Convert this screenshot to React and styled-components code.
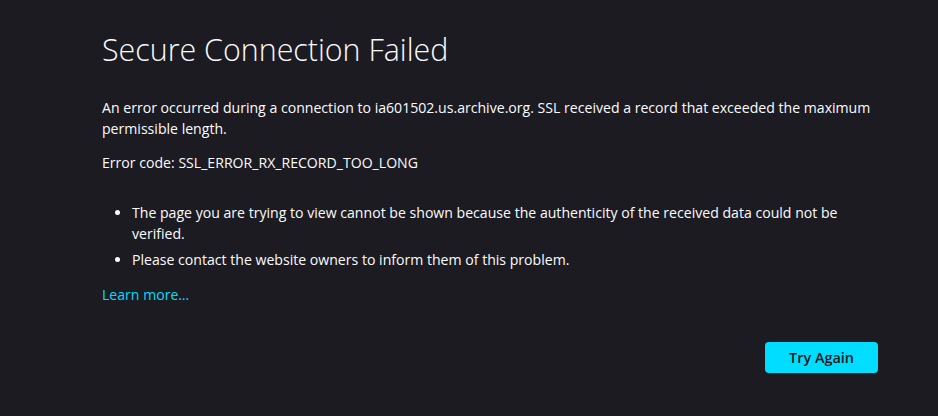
import React from "react";
import styled, { createGlobalStyle } from "styled-components";

const GlobalStyle = createGlobalStyle`
  html, body {
    margin: 0;
    background: #1c1b22;
  }
  body {
    font-family: "Open Sans", "Noto Sans", sans-serif;
    font-size: 14.1px;
    line-height: 21px;
    color: #fbfbfe;
  }
`;

const Page = styled.main`
  min-height: 416px;
  box-sizing: border-box;
  padding: 32px 0 0 102px;
`;

const Container = styled.div`
  width: 776px;
  display: flex;
  flex-direction: column;
`;

const Title = styled.h1`
  margin: 0;
  font-size: 30.4px;
  font-weight: 300;
  line-height: 36px;
`;

const Text = styled.p`
  margin: ${(p) => p.$top}px 0 0;
`;

const List = styled.ul`
  margin: 29px 0 0;
  padding-left: 30px;
`;

const Item = styled.li`
  & + & {
    margin-top: 5px;
  }
`;

const LearnMore = styled.a`
  margin-top: 14px;
  align-self: flex-start;
  color: #00ddff;
  text-decoration: none;
`;

const Actions = styled.div`
  margin-top: 37px;
  display: flex;
  justify-content: flex-end;
`;

const Button = styled.button`
  width: 113px;
  height: 31px;
  border: none;
  border-radius: 4px;
  background: #00ddff;
  color: #15141a;
  font-family: inherit;
  font-size: 14.4px;
  font-weight: 600;
  cursor: pointer;
`;

export default function App() {
  return (
    <>
      <GlobalStyle />
      <Page>
        <Container>
          <Title>Secure Connection Failed</Title>
          <Text $top={29}>
            An error occurred during a connection to ia601502.us.archive.org. SSL received a record that
            exceeded the maximum permissible length.
          </Text>
          <Text $top={13}>Error code: SSL_ERROR_RX_RECORD_TOO_LONG</Text>
          <List>
            <Item>
              The page you are trying to view cannot be shown because the authenticity of the received data
              could not be verified.
            </Item>
            <Item>Please contact the website owners to inform them of this problem.</Item>
          </List>
          <LearnMore href="#">Learn more…</LearnMore>
          <Actions>
            <Button>Try Again</Button>
          </Actions>
        </Container>
      </Page>
    </>
  );
}
